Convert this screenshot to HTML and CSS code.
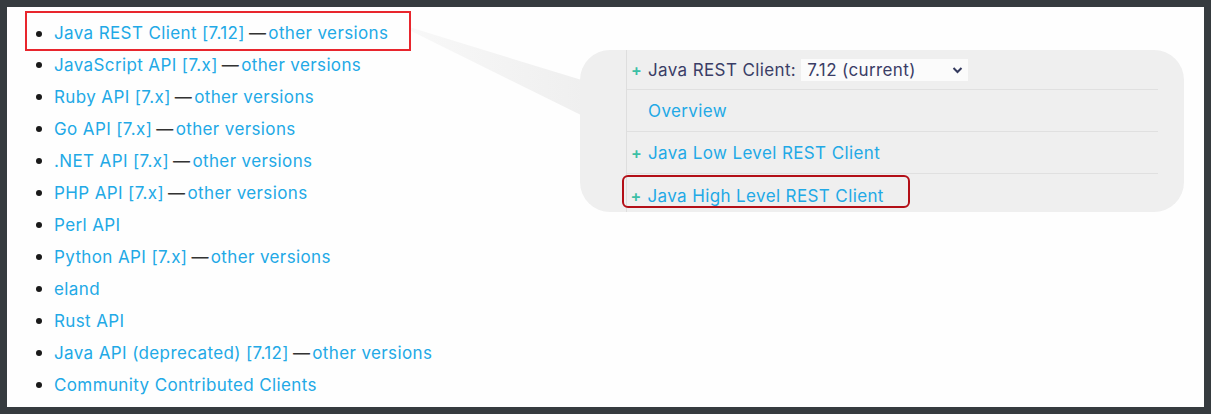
FILE: index.html
```html
<!DOCTYPE html>
<html>
<head>
<meta charset="utf-8">
<link rel="stylesheet" href="styles.css">
</head>
<body>
<div class="frame">
  <ul class="clients">
    <li class="item highlight"><a>Java REST Client [7.12]</a><span class="dash">—</span><a>other versions</a></li>
    <li class="item"><a>JavaScript API [7.x]</a><span class="dash">—</span><a>other versions</a></li>
    <li class="item"><a>Ruby API [7.x]</a><span class="dash">—</span><a>other versions</a></li>
    <li class="item"><a>Go API [7.x]</a><span class="dash">—</span><a>other versions</a></li>
    <li class="item"><a>.NET API [7.x]</a><span class="dash">—</span><a>other versions</a></li>
    <li class="item"><a>PHP API [7.x]</a><span class="dash">—</span><a>other versions</a></li>
    <li class="item"><a>Perl API</a></li>
    <li class="item"><a>Python API [7.x]</a><span class="dash">—</span><a>other versions</a></li>
    <li class="item"><a>eland</a></li>
    <li class="item"><a>Rust API</a></li>
    <li class="item"><a>Java API (deprecated) [7.12]</a><span class="dash">—</span><a>other versions</a></li>
    <li class="item"><a>Community Contributed Clients</a></li>
  </ul>
  <div class="wedge"></div>
  <div class="panel">
    <div class="toc">
      <div class="row">
        <span class="plus">+</span><span class="title">Java REST Client:</span>
        <span class="select"><span>7.12 (current)</span>
          <svg width="11" height="8" viewBox="0 0 11 8"><path d="M1.5 2 L5.5 6 L9.5 2" fill="none" stroke="#343a5e" stroke-width="2"/></svg>
        </span>
      </div>
      <div class="row"><span class="plus blank"></span><a>Overview</a></div>
      <div class="row"><span class="plus">+</span><a>Java Low Level REST Client</a></div>
      <div class="row last"><span class="mark"><span class="plus">+</span><a>Java High Level REST Client</a></span></div>
    </div>
  </div>
</div>
</body>
</html>
```

FILE: styles.css
```css
html, body {
  margin: 0;
  padding: 0;
  background: #363b3f;
}
body {
  padding: 7px;
  font-family: Inter, "Noto Sans", "Liberation Sans", sans-serif;
  font-size: 17px;
  letter-spacing: 0.38px;
}
.frame {
  position: relative;
  width: 1197px;
  height: 400px;
  background: #fefefe;
  display: flex;
  align-items: flex-start;
}
a {
  color: #22a9e6;
}
.clients {
  list-style: none;
  margin: 2px 0 0 0;
  padding: 0;
  display: flex;
  flex-direction: column;
  align-items: flex-start;
  position: relative;
  z-index: 2;
}
.item {
  display: flex;
  align-items: center;
  height: 32px;
  line-height: 32px;
  white-space: nowrap;
}
.item::before {
  content: "";
  width: 6px;
  height: 6px;
  border-radius: 50%;
  background: #1a1a1a;
  margin-left: 29px;
  margin-right: 12px;
}
.dash {
  color: #333;
  margin: 0 2px 0 4px;
}
.highlight {
  height: auto;
  line-height: 31px;
  border: 2px solid #e8262d;
  margin: 2px 0 -2px 18px;
  padding: 5px 21px 0 0;
}
.highlight::before {
  margin-left: 9px;
}
.wedge {
  position: absolute;
  left: 402px;
  top: 20px;
  width: 176px;
  height: 92px;
  background: linear-gradient(to right, #f8f8f8, #efefef);
  clip-path: polygon(0 0, 100% 54px, 100% 90px, 0 3px);
  z-index: 1;
}
.panel {
  position: relative;
  z-index: 1;
  margin: 43px 20px 0 auto;
  width: 604px;
  height: 162px;
  box-sizing: border-box;
  background: #efefef;
  border-radius: 30px;
  padding: 0 26px 0 46px;
  display: flex;
}
.toc {
  flex: 1;
  border-left: 1px solid #dedede;
  display: flex;
  flex-direction: column;
}
.row {
  height: 42px;
  display: flex;
  align-items: center;
  border-bottom: 1px solid #e0e0e0;
  box-sizing: border-box;
  padding-left: 4px;
  white-space: nowrap;
}
.row:first-child {
  height: 40px;
}
.row.last {
  border-bottom: none;
  height: 38px;
  padding-left: 0;
  align-items: flex-start;
  padding-top: 1px;
}
.plus {
  color: #3cbfa5;
  font-size: 16px;
  font-weight: 600;
  width: 17px;
  display: inline-block;
}
.title {
  color: #3a3d66;
}
.select {
  margin-left: 5px;
  width: 167px;
  height: 22px;
  box-sizing: border-box;
  background: #fbfbfb;
  color: #3a3d66;
  display: flex;
  align-items: center;
  justify-content: space-between;
  padding: 0 5px 0 6px;
}
.mark {
  display: flex;
  align-items: center;
  margin-left: -5px;
  height: 33px;
  box-sizing: border-box;
  border: 2.5px solid #b30f17;
  border-radius: 6px;
  padding: 8px 24px 0 6.5px;
}
```
